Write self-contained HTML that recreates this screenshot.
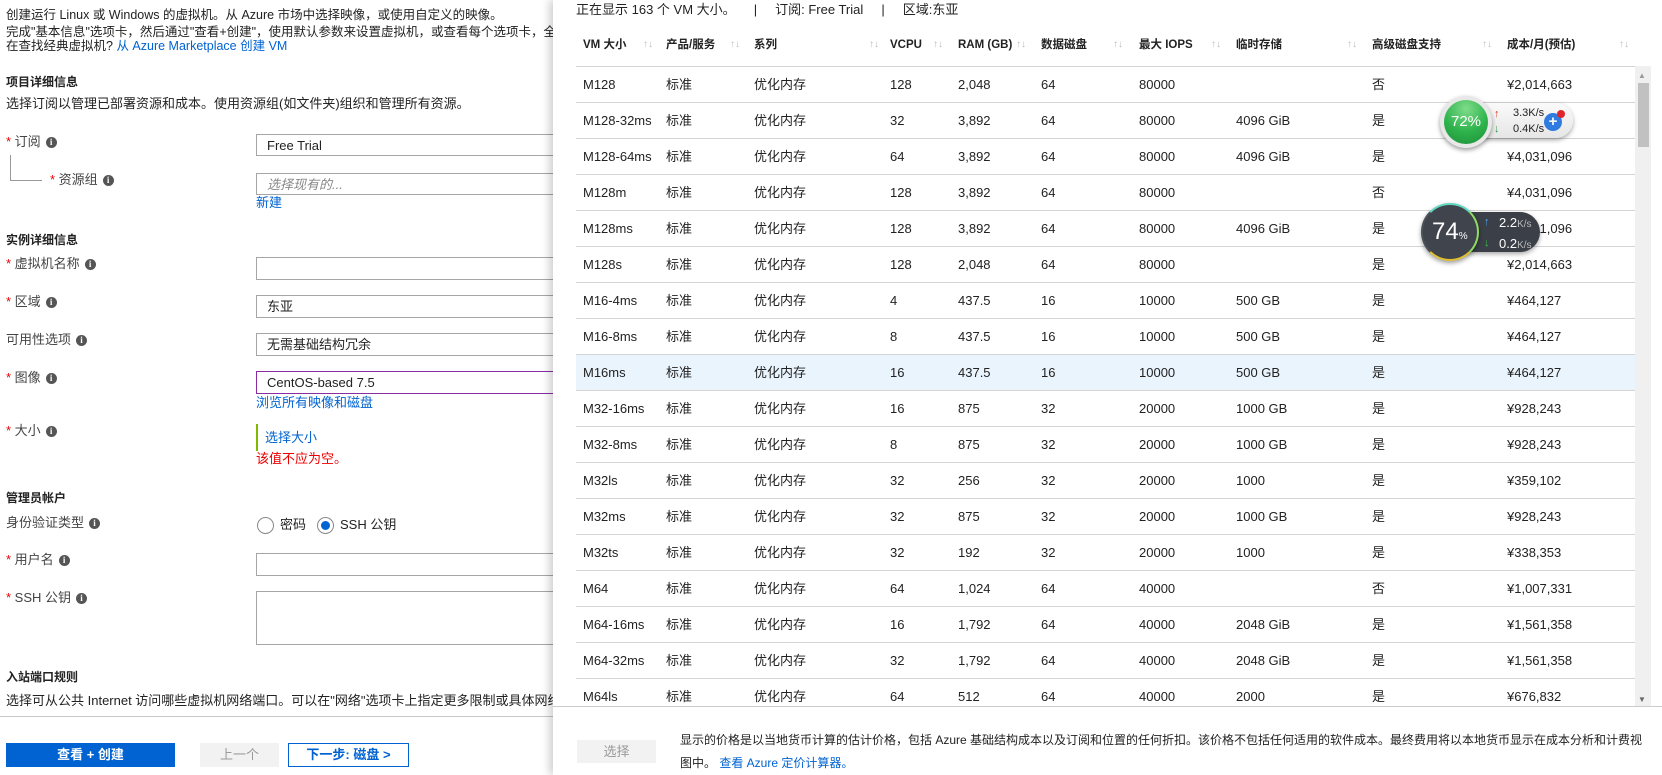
<!DOCTYPE html>
<html><head><meta charset="utf-8">
<style>
*{margin:0;padding:0;box-sizing:border-box}
body{width:1662px;height:775px;overflow:hidden;background:#fff;font-family:"Liberation Sans","Noto Sans CJK SC",sans-serif;font-size:13px;color:#222;position:relative}
.a{position:absolute;white-space:nowrap;line-height:16px}
.b{font-weight:bold;font-size:12px}
.lnk{color:#0063d1}
.req{color:#e00}
.i{display:inline-block;width:11px;height:11px;border-radius:50%;background:#555;color:#fff;font-size:9px;line-height:11px;text-align:center;font-weight:bold;vertical-align:1px;margin-left:5px;font-family:"Liberation Serif",serif}
.box{position:absolute;left:256px;width:320px;border:1px solid #a6a6a6;background:#fff}
.lbl{color:#444}
#panel{position:absolute;left:553px;top:0;width:1109px;height:775px;background:#fff;box-shadow:-4px 0 8px rgba(0,0,0,.18)}
.row{position:absolute;left:23px;width:1059px;height:36px;border-top:1px solid #d4d4d4}
.row span{position:absolute;top:10px;line-height:16px;white-space:nowrap}
.hd span{position:absolute;top:37px;font-size:11.5px;font-weight:bold;color:#222;white-space:nowrap;line-height:16px}
.hd span.ar{top:37px;color:#bbb;font-size:10px;font-weight:normal}
</style></head><body>
<div class="a" style="left:6px;top:7px;font-size:12.5px">创建运行 Linux 或 Windows 的虚拟机。从 Azure 市场中选择映像，或使用自定义的映像。</div>
<div class="a" style="left:6px;top:24px;font-size:12.5px">完成"基本信息"选项卡，然后通过"查看+创建"，使用默认参数来设置虚拟机，或查看每个选项卡，全部</div>
<div class="a" style="left:6px;top:38px;font-size:12.5px">在查找经典虚拟机? <span class="lnk">从 Azure Marketplace 创建 VM</span></div>
<div class="a b" style="left:6px;top:74px">项目详细信息</div>
<div class="a" style="left:6px;top:96px">选择订阅以管理已部署资源和成本。使用资源组(如文件夹)组织和管理所有资源。</div>
<div class="a lbl" style="left:6px;top:134px"><span class="req">*</span> 订阅<span class="i">i</span></div>
<div class="box" style="top:134px;height:22px"><span class="a" style="left:10px;top:3px">Free Trial</span></div>
<div style="position:absolute;left:10px;top:155px;width:32px;height:26px;border-left:1px solid #999;border-bottom:1px solid #999"></div>
<div class="a lbl" style="left:50px;top:172px"><span class="req">*</span> 资源组<span class="i">i</span></div>
<div class="box" style="top:173px;height:22px"><span class="a" style="left:10px;top:3px;color:#888;font-style:italic">选择现有的...</span></div>
<div class="a lnk" style="left:256px;top:195px">新建</div>
<div class="a b" style="left:6px;top:232px">实例详细信息</div>
<div class="a lbl" style="left:6px;top:256px"><span class="req">*</span> 虚拟机名称<span class="i">i</span></div>
<div class="box" style="top:257px;height:23px"></div>
<div class="a lbl" style="left:6px;top:294px"><span class="req">*</span> 区域<span class="i">i</span></div>
<div class="box" style="top:295px;height:23px"><span class="a" style="left:10px;top:3px">东亚</span></div>
<div class="a lbl" style="left:6px;top:332px">可用性选项<span class="i">i</span></div>
<div class="box" style="top:333px;height:23px"><span class="a" style="left:10px;top:3px">无需基础结构冗余</span></div>
<div class="a lbl" style="left:6px;top:370px"><span class="req">*</span> 图像<span class="i">i</span></div>
<div class="box" style="top:371px;height:23px;border-color:#8a2da5"><span class="a" style="left:10px;top:3px">CentOS-based 7.5</span></div>
<div class="a lnk" style="left:256px;top:395px">浏览所有映像和磁盘</div>
<div class="a lbl" style="left:6px;top:423px"><span class="req">*</span> 大小<span class="i">i</span></div>
<div style="position:absolute;left:256px;top:424px;width:2px;height:27px;background:#7fba00"></div>
<div class="a lnk" style="left:265px;top:430px">选择大小</div>
<div class="a" style="left:256px;top:451px;color:#e00">该值不应为空。</div>
<div class="a b" style="left:6px;top:490px">管理员帐户</div>
<div class="a lbl" style="left:6px;top:515px">身份验证类型<span class="i">i</span></div>
<div style="position:absolute;left:257px;top:517px;width:17px;height:17px;border:1px solid #888;border-radius:50%"></div>
<div class="a" style="left:280px;top:517px">密码</div>
<div style="position:absolute;left:317px;top:517px;width:17px;height:17px;border:1px solid #888;border-radius:50%"><div style="margin:3px;width:9px;height:9px;border-radius:50%;background:#0063d1"></div></div>
<div class="a" style="left:340px;top:517px">SSH 公钥</div>
<div class="a lbl" style="left:6px;top:552px"><span class="req">*</span> 用户名<span class="i">i</span></div>
<div class="box" style="top:553px;height:23px"></div>
<div class="a lbl" style="left:6px;top:590px"><span class="req">*</span> SSH 公钥<span class="i">i</span></div>
<div class="box" style="top:591px;height:54px"></div>
<div class="a b" style="left:6px;top:669px">入站端口规则</div>
<div class="a" style="left:6px;top:693px">选择可从公共 Internet 访问哪些虚拟机网络端口。可以在"网络"选项卡上指定更多限制或具体网络访问。</div>
<div style="position:absolute;left:0;top:716px;width:553px;height:1px;background:#c8c8c8"></div>
<div class="a" style="left:6px;top:743px;width:169px;height:24px;background:#0063d1;color:#fff;font-weight:bold;text-align:center;line-height:24px">查看 + 创建</div>
<div class="a" style="left:200px;top:743px;width:79px;height:24px;background:#f2f2f2;color:#999;text-align:center;line-height:24px">上一个</div>
<div class="a" style="left:288px;top:743px;width:121px;height:24px;border:1px solid #0063d1;color:#0063d1;font-weight:bold;text-align:center;line-height:22px">下一步: 磁盘 &gt;</div>

<div id="panel">
<div class="a" style="left:23px;top:2px">正在显示 163 个 VM 大小。 &nbsp;&nbsp;&nbsp;&nbsp;| &nbsp;&nbsp;&nbsp;&nbsp;订阅: Free Trial &nbsp;&nbsp;&nbsp;&nbsp;| &nbsp;&nbsp;&nbsp;&nbsp;区域:东亚</div>
<div class="hd">
<span style="left:30px">VM 大小</span><span style="left:113px">产品/服务</span><span style="left:201px">系列</span><span style="left:337px">VCPU</span><span style="left:405px">RAM (GB)</span><span style="left:488px">数据磁盘</span><span style="left:586px">最大 IOPS</span><span style="left:683px">临时存储</span><span style="left:819px">高级磁盘支持</span><span style="left:954px">成本/月(预估)</span>
<span class="ar" style="left:90px">↑↓</span><span class="ar" style="left:177px">↑↓</span><span class="ar" style="left:316px">↑↓</span><span class="ar" style="left:380px">↑↓</span><span class="ar" style="left:463px">↑↓</span><span class="ar" style="left:560px">↑↓</span><span class="ar" style="left:658px">↑↓</span><span class="ar" style="left:794px">↑↓</span><span class="ar" style="left:929px">↑↓</span><span class="ar" style="left:1066px">↑↓</span>
</div>
<div style="position:absolute;left:0;top:66px;width:1109px;height:640px;overflow:hidden">
<div id="rows"></div>
</div>
<div style="position:absolute;left:1082px;top:66px;width:16px;height:640px;background:#f0f0f0"></div>
<div style="position:absolute;left:1085px;top:83px;width:11px;height:64px;background:#c1c1c1"></div>
<div class="a" style="left:1085px;top:68px;font-size:8px;color:#999">▲</div>
<div class="a" style="left:1085px;top:692px;font-size:8px;color:#666">▼</div>
<div style="position:absolute;left:0;top:706px;width:1109px;height:1px;background:#ccc"></div>
<div class="a" style="left:24px;top:740px;width:79px;height:23px;background:#f2f2f2;color:#999;text-align:center;line-height:23px">选择</div>
<div class="a" style="left:127px;top:732px;font-size:12px">显示的价格是以当地货币计算的估计价格，包括 Azure 基础结构成本以及订阅和位置的任何折扣。该价格不包括任何适用的软件成本。最终费用将以本地货币显示在成本分析和计费视</div>
<div class="a" style="left:127px;top:755px;font-size:12px">图中。 <span class="lnk">查看 Azure 定价计算器。</span></div>
</div>

<!-- widget 1 -->
<div style="position:absolute;left:1466px;top:103px;width:107px;height:35px;border-radius:18px;background:linear-gradient(#fafafa,#e6e6e6);box-shadow:0 2px 5px rgba(0,0,0,.35)"></div>
<div class="a" style="left:1494px;top:106px;color:#e04020;font-size:11px">↑</div>
<div class="a" style="left:1494px;top:121px;color:#2a9a40;font-size:11px">↓</div>
<div class="a" style="left:1513px;top:105px;font-size:11px">3.3K/s</div>
<div class="a" style="left:1513px;top:121px;font-size:11px">0.4K/s</div>
<div style="position:absolute;left:1544px;top:113px;width:18px;height:18px;border-radius:50%;background:#2f7be0;color:#fff;text-align:center;line-height:18px;font-weight:bold;font-size:15px">+</div>
<div style="position:absolute;left:1557px;top:110px;width:8px;height:8px;border-radius:50%;background:#e0252a"></div>
<div style="position:absolute;left:1440px;top:96px;width:52px;height:52px;border-radius:50%;background:#e8e8e8;box-shadow:0 2px 5px rgba(0,0,0,.4)"></div>
<div style="position:absolute;left:1444px;top:100px;width:44px;height:44px;border-radius:50%;background:radial-gradient(circle at 50% 20%,#7fdc8a,#2eb34c 55%,#1f8f3a);color:#fff;font-size:15px;text-align:center;line-height:44px">72%</div>

<!-- widget 2 -->
<div style="position:absolute;left:1450px;top:212px;width:90px;height:40px;border-radius:20px;background:#3b3f48;box-shadow:0 2px 5px rgba(0,0,0,.35)"></div>
<div class="a" style="left:1484px;top:214px;color:#49a8f0;font-size:11px">↑</div>
<div class="a" style="left:1484px;top:235px;color:#3bbf4a;font-size:11px">↓</div>
<div class="a" style="left:1499px;top:215px;color:#fff;font-size:13px">2.2<span style="font-size:10px;color:#bbb">K/s</span></div>
<div class="a" style="left:1499px;top:236px;color:#fff;font-size:13px">0.2<span style="font-size:10px;color:#bbb">K/s</span></div>
<div style="position:absolute;left:1421px;top:203px;width:58px;height:58px;border-radius:50%;background:#40444d;box-shadow:0 2px 5px rgba(0,0,0,.4);border:2px solid;border-color:#5fd8c0 #8fdc60 #e0c030 #4b5058"></div>
<div class="a" style="left:1432px;top:218px;color:#fff;font-size:24px;line-height:28px">74<span style="font-size:10px">%</span></div>

<script>
var d=[
["M128","128","2,048","64","80000","","否","¥2,014,663"],
["M128-32ms","32","3,892","64","80000","4096 GiB","是","¥4,031,096"],
["M128-64ms","64","3,892","64","80000","4096 GiB","是","¥4,031,096"],
["M128m","128","3,892","64","80000","","否","¥4,031,096"],
["M128ms","128","3,892","64","80000","4096 GiB","是","¥4,031,096"],
["M128s","128","2,048","64","80000","","是","¥2,014,663"],
["M16-4ms","4","437.5","16","10000","500 GB","是","¥464,127"],
["M16-8ms","8","437.5","16","10000","500 GB","是","¥464,127"],
["M16ms","16","437.5","16","10000","500 GB","是","¥464,127"],
["M32-16ms","16","875","32","20000","1000 GB","是","¥928,243"],
["M32-8ms","8","875","32","20000","1000 GB","是","¥928,243"],
["M32ls","32","256","32","20000","1000","是","¥359,102"],
["M32ms","32","875","32","20000","1000 GB","是","¥928,243"],
["M32ts","32","192","32","20000","1000","是","¥338,353"],
["M64","64","1,024","64","40000","","否","¥1,007,331"],
["M64-16ms","16","1,792","64","40000","2048 GiB","是","¥1,561,358"],
["M64-32ms","32","1,792","64","40000","2048 GiB","是","¥1,561,358"],
["M64ls","64","512","64","40000","2000","是","¥676,832"]];
var x=[7,90,178,314,382,465,563,660,796,931],h="";
for(var i=0;i<d.length;i++){var r=d[i],c=[r[0],"标准","优化内存",r[1],r[2],r[3],r[4],r[5],r[6],r[7]];
h+='<div class="row" style="top:'+(i*36)+'px;'+(i==8?'background:#eaf4fd;':'')+'">';
for(var j=0;j<10;j++)h+='<span style="left:'+x[j]+'px">'+c[j]+'</span>';h+='</div>';}
document.getElementById("rows").innerHTML=h;
</script>
</body></html>
